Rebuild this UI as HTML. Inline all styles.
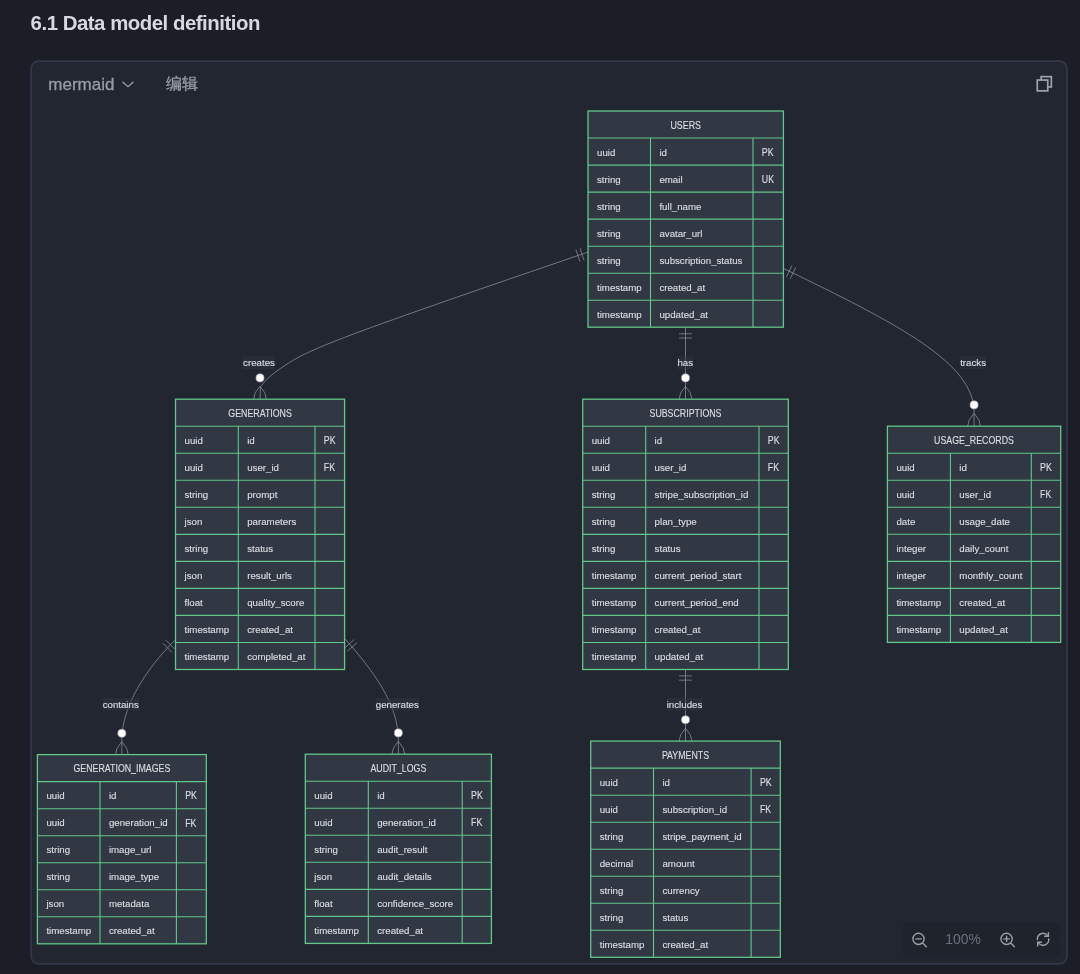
<!DOCTYPE html>
<html><head><meta charset="utf-8"><style>
html,body{margin:0;padding:0;width:1080px;height:974px;overflow:hidden;background:#1b1e26;font-family:"Liberation Sans",sans-serif;}
.title{position:absolute;left:30.6px;top:9.6px;font-size:20.4px;letter-spacing:-0.48px;font-weight:bold;color:#d6d9e0;white-space:nowrap;line-height:26px;}
.box{position:absolute;left:30.7px;top:60.7px;width:1036.6px;height:903.2px;box-sizing:border-box;border:1.4px solid #363a4a;border-radius:8px;background:#22252f;}
.hdr{position:absolute;left:48.3px;top:72.6px;-webkit-text-stroke:0.3px #9a9da7;font-size:17px;color:#9a9da7;white-space:nowrap;line-height:24px;}
.edit{position:absolute;left:165.5px;top:72px;-webkit-text-stroke:0.3px #9a9da7;font-size:16px;color:#9a9da7;white-space:nowrap;line-height:24px;}
svg{position:absolute;left:0;top:0;}
svg text{stroke:#dadce2;stroke-width:0.15px;}
.wrap{position:absolute;left:0;top:0;width:1080px;height:974px;will-change:transform;}
.tb{position:absolute;left:901.5px;top:922.2px;width:158px;height:34.8px;border-radius:7px;background:#1f232c;}
.pct{position:absolute;left:945.3px;top:930.4px;font-size:13.9px;color:#6d707b;line-height:18px;white-space:nowrap;}
</style></head><body><div class="wrap">
<div class="title">6.1 Data model definition</div>
<svg width="1080" height="974" style="position:absolute;left:0;top:0"><rect x="31.1" y="61.1" width="1035.9" height="902.7" rx="7.5" fill="#222630" stroke="#34374a" stroke-width="1.7"/></svg>
<div class="hdr">mermaid</div>
<div class="edit">编辑</div>
<div class="tb"></div>
<div class="pct">100%</div>
<svg width="1080" height="974" viewBox="0 0 1080 974">
<g>
<path d="M122.5,81.7L128,86.7L133.5,81.7" fill="none" stroke="#9a9da7" stroke-width="1.25"/>
<g fill="none" stroke="#9fa2ab" stroke-width="1.7">
<rect x="1041.15" y="76.65" width="10.2" height="10.3"/>
<rect x="1037.25" y="80.05" width="10.5" height="10.8" fill="#222630"/>
</g>
<g fill="none" stroke="#9c9fa8" stroke-width="1.4" stroke-linecap="round">
<circle cx="918.5" cy="938.9" r="5.6"/><path d="M922.6,943L926.3,946.7M915.8,938.9H921.2"/>
<circle cx="1006.6" cy="938.9" r="5.6"/><path d="M1010.7,943L1014.4,946.7M1003.9,938.9H1009.3M1006.6,936.2V941.6"/>
<path d="M1037.4,939.5A5.7,5.7 0 0 1 1047.6,935.6M1048.7,938.9A5.7,5.7 0 0 1 1038.6,943.1"/>
<path d="M1048.4,932.6V936.3H1044.7M1037.7,945.9V942.2H1041.4"/>
</g>
</g>
<g font-family="Liberation Sans, sans-serif" font-size="9.9" fill="#dadce2">
<path d="M588.00,252.10L544.04,267.16C500.09,282.22,412.18,312.35,361.99,330.87C311.80,349.39,299.33,356.30,288.32,363.29C277.30,370.28,267.73,377.36,263.25,383.35C261.5,385.7,260.6,386.6,260.4,387.0L260.00,399.20" fill="none" stroke="#9598a3" stroke-width="0.71"/><path d="M685.5,327.4L685.5,399.2" fill="none" stroke="#9598a3" stroke-width="0.71"/><path d="M783.4,268.4C898.4,324.1,974.05,362.9,974.05,412.0L974.05,426.2" fill="none" stroke="#9598a3" stroke-width="0.71"/><path d="M174.9,640.2C145.1,669.9,121.85,707.1,121.85,740.0L121.85,754.6" fill="none" stroke="#9598a3" stroke-width="0.71"/><path d="M345.1,639.0C373.3,670.9,398.35,703.9,398.35,740.0L398.35,754.2" fill="none" stroke="#9598a3" stroke-width="0.71"/><path d="M685.5,669.5L685.5,741.1" fill="none" stroke="#9598a3" stroke-width="0.71"/><path d="M584.02,260.21L579.89,248.12M579.99,261.59L575.86,249.50M691.89,333.79L679.11,333.79M691.89,338.05L679.11,338.05M791.94,265.43L786.37,276.94M795.77,267.29L790.20,278.79M174.88,649.24L165.86,640.18M171.87,652.24L162.85,643.19M354.12,639.56L344.54,648.02M356.94,642.75L347.37,651.21M691.89,675.89L679.11,675.89M691.89,680.15L679.11,680.15" fill="none" stroke="#9598a3" stroke-width="0.71"/><path d="M260.00,386.42Q247.22,399.20 260.00,411.98Q272.78,399.20 260.00,386.42" fill="none" stroke="#9598a3" stroke-width="0.71"/><circle cx="260.00" cy="377.90" r="4.05" fill="#fff" stroke="#9598a3" stroke-width="0.71"/><path d="M685.50,386.42Q672.72,399.20 685.50,411.98Q698.28,399.20 685.50,386.42" fill="none" stroke="#9598a3" stroke-width="0.71"/><circle cx="685.50" cy="377.90" r="4.05" fill="#fff" stroke="#9598a3" stroke-width="0.71"/><path d="M974.05,413.42Q961.27,426.20 974.05,438.98Q986.83,426.20 974.05,413.42" fill="none" stroke="#9598a3" stroke-width="0.71"/><circle cx="974.05" cy="404.90" r="4.05" fill="#fff" stroke="#9598a3" stroke-width="0.71"/><path d="M121.85,741.82Q109.07,754.60 121.85,767.38Q134.63,754.60 121.85,741.82" fill="none" stroke="#9598a3" stroke-width="0.71"/><circle cx="121.85" cy="733.30" r="4.05" fill="#fff" stroke="#9598a3" stroke-width="0.71"/><path d="M398.35,741.42Q385.57,754.20 398.35,766.98Q411.13,754.20 398.35,741.42" fill="none" stroke="#9598a3" stroke-width="0.71"/><circle cx="398.35" cy="732.90" r="4.05" fill="#fff" stroke="#9598a3" stroke-width="0.71"/><path d="M685.50,728.32Q672.72,741.10 685.50,753.88Q698.28,741.10 685.50,728.32" fill="none" stroke="#9598a3" stroke-width="0.71"/><circle cx="685.50" cy="719.80" r="4.05" fill="#fff" stroke="#9598a3" stroke-width="0.71"/>
<rect x="242.8" y="356.3" width="32.4" height="12.9" fill="#2e3442" opacity="0.5"/><text x="259.0" y="366.0" text-anchor="middle" textLength="31.8" lengthAdjust="spacingAndGlyphs">creates</text><rect x="677.1" y="356.3" width="16.2" height="12.9" fill="#2e3442" opacity="0.5"/><text x="685.2" y="366.0" text-anchor="middle" textLength="15.6" lengthAdjust="spacingAndGlyphs">has</text><rect x="959.9" y="356.3" width="26.5" height="12.9" fill="#2e3442" opacity="0.5"/><text x="973.1" y="366.0" text-anchor="middle" textLength="25.9" lengthAdjust="spacingAndGlyphs">tracks</text><rect x="102.3" y="697.9" width="36.7" height="12.9" fill="#2e3442" opacity="0.5"/><text x="120.7" y="707.6" text-anchor="middle" textLength="36.1" lengthAdjust="spacingAndGlyphs">contains</text><rect x="375.4" y="697.9" width="43.7" height="12.9" fill="#2e3442" opacity="0.5"/><text x="397.3" y="707.6" text-anchor="middle" textLength="43.1" lengthAdjust="spacingAndGlyphs">generates</text><rect x="666.4" y="697.9" width="36.2" height="12.9" fill="#2e3442" opacity="0.5"/><text x="684.5" y="707.6" text-anchor="middle" textLength="35.6" lengthAdjust="spacingAndGlyphs">includes</text>
<rect x="588.0" y="111.0" width="195.4" height="216.2" fill="#313743"/><path d="M588.0,138.0H783.4M588.0,165.1H783.4M588.0,192.1H783.4M588.0,219.1H783.4M588.0,246.2H783.4M588.0,273.2H783.4M588.0,300.2H783.4M650.5,138.0V327.2M753.0,138.0V327.2" stroke="#63c68a" stroke-width="1.1" fill="none"/><rect x="588.0" y="111.0" width="195.4" height="216.2" fill="none" stroke="#63c68a" stroke-width="1.3"/><text x="685.7" y="128.7" text-anchor="middle" textLength="30.4" lengthAdjust="spacingAndGlyphs" font-size="10.1">USERS</text><text x="597.0" y="155.6" text-anchor="start" textLength="18.3" lengthAdjust="spacingAndGlyphs">uuid</text><text x="659.4" y="155.6" text-anchor="start" textLength="7.6" lengthAdjust="spacingAndGlyphs">id</text><text x="761.8" y="155.8" text-anchor="start" textLength="11.8" lengthAdjust="spacingAndGlyphs" font-size="10.3">PK</text><text x="597.0" y="182.7" text-anchor="start" textLength="23.7" lengthAdjust="spacingAndGlyphs">string</text><text x="659.4" y="182.7" text-anchor="start" textLength="23.2" lengthAdjust="spacingAndGlyphs">email</text><text x="761.8" y="182.9" text-anchor="start" textLength="12.2" lengthAdjust="spacingAndGlyphs" font-size="10.3">UK</text><text x="597.0" y="209.7" text-anchor="start" textLength="23.7" lengthAdjust="spacingAndGlyphs">string</text><text x="659.4" y="209.7" text-anchor="start" textLength="42.1" lengthAdjust="spacingAndGlyphs">full_name</text><text x="597.0" y="236.7" text-anchor="start" textLength="23.7" lengthAdjust="spacingAndGlyphs">string</text><text x="659.4" y="236.7" text-anchor="start" textLength="43.1" lengthAdjust="spacingAndGlyphs">avatar_url</text><text x="597.0" y="263.8" text-anchor="start" textLength="23.7" lengthAdjust="spacingAndGlyphs">string</text><text x="659.4" y="263.8" text-anchor="start" textLength="83.0" lengthAdjust="spacingAndGlyphs">subscription_status</text><text x="597.0" y="290.8" text-anchor="start" textLength="44.7" lengthAdjust="spacingAndGlyphs">timestamp</text><text x="659.4" y="290.8" text-anchor="start" textLength="45.8" lengthAdjust="spacingAndGlyphs">created_at</text><text x="597.0" y="317.8" text-anchor="start" textLength="44.7" lengthAdjust="spacingAndGlyphs">timestamp</text><text x="659.4" y="317.8" text-anchor="start" textLength="48.6" lengthAdjust="spacingAndGlyphs">updated_at</text><rect x="175.5" y="399.2" width="169.1" height="270.3" fill="#313743"/><path d="M175.5,426.2H344.6M175.5,453.3H344.6M175.5,480.3H344.6M175.5,507.3H344.6M175.5,534.4H344.6M175.5,561.4H344.6M175.5,588.4H344.6M175.5,615.4H344.6M175.5,642.5H344.6M238.3,426.2V669.5M315.0,426.2V669.5" stroke="#63c68a" stroke-width="1.1" fill="none"/><rect x="175.5" y="399.2" width="169.1" height="270.3" fill="none" stroke="#63c68a" stroke-width="1.3"/><text x="260.1" y="416.9" text-anchor="middle" textLength="63.5" lengthAdjust="spacingAndGlyphs" font-size="10.1">GENERATIONS</text><text x="184.5" y="443.8" text-anchor="start" textLength="18.3" lengthAdjust="spacingAndGlyphs">uuid</text><text x="247.2" y="443.8" text-anchor="start" textLength="7.6" lengthAdjust="spacingAndGlyphs">id</text><text x="323.8" y="444.0" text-anchor="start" textLength="11.8" lengthAdjust="spacingAndGlyphs" font-size="10.3">PK</text><text x="184.5" y="470.9" text-anchor="start" textLength="18.3" lengthAdjust="spacingAndGlyphs">uuid</text><text x="247.2" y="470.9" text-anchor="start" textLength="31.8" lengthAdjust="spacingAndGlyphs">user_id</text><text x="323.8" y="471.1" text-anchor="start" textLength="11.3" lengthAdjust="spacingAndGlyphs" font-size="10.3">FK</text><text x="184.5" y="497.9" text-anchor="start" textLength="23.7" lengthAdjust="spacingAndGlyphs">string</text><text x="247.2" y="497.9" text-anchor="start" textLength="30.2" lengthAdjust="spacingAndGlyphs">prompt</text><text x="184.5" y="524.9" text-anchor="start" textLength="17.8" lengthAdjust="spacingAndGlyphs">json</text><text x="247.2" y="524.9" text-anchor="start" textLength="49.1" lengthAdjust="spacingAndGlyphs">parameters</text><text x="184.5" y="552.0" text-anchor="start" textLength="23.7" lengthAdjust="spacingAndGlyphs">string</text><text x="247.2" y="552.0" text-anchor="start" textLength="25.9" lengthAdjust="spacingAndGlyphs">status</text><text x="184.5" y="579.0" text-anchor="start" textLength="17.8" lengthAdjust="spacingAndGlyphs">json</text><text x="247.2" y="579.0" text-anchor="start" textLength="44.8" lengthAdjust="spacingAndGlyphs">result_urls</text><text x="184.5" y="606.0" text-anchor="start" textLength="18.3" lengthAdjust="spacingAndGlyphs">float</text><text x="247.2" y="606.0" text-anchor="start" textLength="57.2" lengthAdjust="spacingAndGlyphs">quality_score</text><text x="184.5" y="633.1" text-anchor="start" textLength="44.7" lengthAdjust="spacingAndGlyphs">timestamp</text><text x="247.2" y="633.1" text-anchor="start" textLength="45.8" lengthAdjust="spacingAndGlyphs">created_at</text><text x="184.5" y="660.1" text-anchor="start" textLength="44.7" lengthAdjust="spacingAndGlyphs">timestamp</text><text x="247.2" y="660.1" text-anchor="start" textLength="58.2" lengthAdjust="spacingAndGlyphs">completed_at</text><rect x="582.7" y="399.2" width="205.6" height="270.3" fill="#313743"/><path d="M582.7,426.2H788.3M582.7,453.3H788.3M582.7,480.3H788.3M582.7,507.3H788.3M582.7,534.4H788.3M582.7,561.4H788.3M582.7,588.4H788.3M582.7,615.4H788.3M582.7,642.5H788.3M645.7,426.2V669.5M759.0,426.2V669.5" stroke="#63c68a" stroke-width="1.1" fill="none"/><rect x="582.7" y="399.2" width="205.6" height="270.3" fill="none" stroke="#63c68a" stroke-width="1.3"/><text x="685.5" y="416.9" text-anchor="middle" textLength="72.0" lengthAdjust="spacingAndGlyphs" font-size="10.1">SUBSCRIPTIONS</text><text x="591.7" y="443.8" text-anchor="start" textLength="18.3" lengthAdjust="spacingAndGlyphs">uuid</text><text x="654.6" y="443.8" text-anchor="start" textLength="7.6" lengthAdjust="spacingAndGlyphs">id</text><text x="767.8" y="444.0" text-anchor="start" textLength="11.8" lengthAdjust="spacingAndGlyphs" font-size="10.3">PK</text><text x="591.7" y="470.9" text-anchor="start" textLength="18.3" lengthAdjust="spacingAndGlyphs">uuid</text><text x="654.6" y="470.9" text-anchor="start" textLength="31.8" lengthAdjust="spacingAndGlyphs">user_id</text><text x="767.8" y="471.1" text-anchor="start" textLength="11.3" lengthAdjust="spacingAndGlyphs" font-size="10.3">FK</text><text x="591.7" y="497.9" text-anchor="start" textLength="23.7" lengthAdjust="spacingAndGlyphs">string</text><text x="654.6" y="497.9" text-anchor="start" textLength="93.8" lengthAdjust="spacingAndGlyphs">stripe_subscription_id</text><text x="591.7" y="524.9" text-anchor="start" textLength="23.7" lengthAdjust="spacingAndGlyphs">string</text><text x="654.6" y="524.9" text-anchor="start" textLength="42.1" lengthAdjust="spacingAndGlyphs">plan_type</text><text x="591.7" y="552.0" text-anchor="start" textLength="23.7" lengthAdjust="spacingAndGlyphs">string</text><text x="654.6" y="552.0" text-anchor="start" textLength="25.9" lengthAdjust="spacingAndGlyphs">status</text><text x="591.7" y="579.0" text-anchor="start" textLength="44.7" lengthAdjust="spacingAndGlyphs">timestamp</text><text x="654.6" y="579.0" text-anchor="start" textLength="86.8" lengthAdjust="spacingAndGlyphs">current_period_start</text><text x="591.7" y="606.0" text-anchor="start" textLength="44.7" lengthAdjust="spacingAndGlyphs">timestamp</text><text x="654.6" y="606.0" text-anchor="start" textLength="84.1" lengthAdjust="spacingAndGlyphs">current_period_end</text><text x="591.7" y="633.1" text-anchor="start" textLength="44.7" lengthAdjust="spacingAndGlyphs">timestamp</text><text x="654.6" y="633.1" text-anchor="start" textLength="45.8" lengthAdjust="spacingAndGlyphs">created_at</text><text x="591.7" y="660.1" text-anchor="start" textLength="44.7" lengthAdjust="spacingAndGlyphs">timestamp</text><text x="654.6" y="660.1" text-anchor="start" textLength="48.6" lengthAdjust="spacingAndGlyphs">updated_at</text><rect x="887.4" y="426.2" width="173.3" height="216.2" fill="#313743"/><path d="M887.4,453.2H1060.7M887.4,480.3H1060.7M887.4,507.3H1060.7M887.4,534.3H1060.7M887.4,561.4H1060.7M887.4,588.4H1060.7M887.4,615.4H1060.7M950.4,453.2V642.4M1031.3,453.2V642.4" stroke="#63c68a" stroke-width="1.1" fill="none"/><rect x="887.4" y="426.2" width="173.3" height="216.2" fill="none" stroke="#63c68a" stroke-width="1.3"/><text x="974.0" y="443.9" text-anchor="middle" textLength="79.8" lengthAdjust="spacingAndGlyphs" font-size="10.1">USAGE_RECORDS</text><text x="896.4" y="470.8" text-anchor="start" textLength="18.3" lengthAdjust="spacingAndGlyphs">uuid</text><text x="959.3" y="470.8" text-anchor="start" textLength="7.6" lengthAdjust="spacingAndGlyphs">id</text><text x="1040.1" y="471.0" text-anchor="start" textLength="11.8" lengthAdjust="spacingAndGlyphs" font-size="10.3">PK</text><text x="896.4" y="497.9" text-anchor="start" textLength="18.3" lengthAdjust="spacingAndGlyphs">uuid</text><text x="959.3" y="497.9" text-anchor="start" textLength="31.8" lengthAdjust="spacingAndGlyphs">user_id</text><text x="1040.1" y="498.1" text-anchor="start" textLength="11.3" lengthAdjust="spacingAndGlyphs" font-size="10.3">FK</text><text x="896.4" y="524.9" text-anchor="start" textLength="18.9" lengthAdjust="spacingAndGlyphs">date</text><text x="959.3" y="524.9" text-anchor="start" textLength="50.7" lengthAdjust="spacingAndGlyphs">usage_date</text><text x="896.4" y="551.9" text-anchor="start" textLength="29.7" lengthAdjust="spacingAndGlyphs">integer</text><text x="959.3" y="551.9" text-anchor="start" textLength="49.1" lengthAdjust="spacingAndGlyphs">daily_count</text><text x="896.4" y="579.0" text-anchor="start" textLength="29.7" lengthAdjust="spacingAndGlyphs">integer</text><text x="959.3" y="579.0" text-anchor="start" textLength="63.1" lengthAdjust="spacingAndGlyphs">monthly_count</text><text x="896.4" y="606.0" text-anchor="start" textLength="44.7" lengthAdjust="spacingAndGlyphs">timestamp</text><text x="959.3" y="606.0" text-anchor="start" textLength="45.8" lengthAdjust="spacingAndGlyphs">created_at</text><text x="896.4" y="633.0" text-anchor="start" textLength="44.7" lengthAdjust="spacingAndGlyphs">timestamp</text><text x="959.3" y="633.0" text-anchor="start" textLength="48.6" lengthAdjust="spacingAndGlyphs">updated_at</text><rect x="37.4" y="754.6" width="168.9" height="189.2" fill="#313743"/><path d="M37.4,781.6H206.3M37.4,808.7H206.3M37.4,835.7H206.3M37.4,862.7H206.3M37.4,889.8H206.3M37.4,916.8H206.3M100.0,781.6V943.8M176.4,781.6V943.8" stroke="#63c68a" stroke-width="1.1" fill="none"/><rect x="37.4" y="754.6" width="168.9" height="189.2" fill="none" stroke="#63c68a" stroke-width="1.3"/><text x="121.9" y="772.3" text-anchor="middle" textLength="96.8" lengthAdjust="spacingAndGlyphs" font-size="10.1">GENERATION_IMAGES</text><text x="46.4" y="799.2" text-anchor="start" textLength="18.3" lengthAdjust="spacingAndGlyphs">uuid</text><text x="108.9" y="799.2" text-anchor="start" textLength="7.6" lengthAdjust="spacingAndGlyphs">id</text><text x="185.2" y="799.4" text-anchor="start" textLength="11.8" lengthAdjust="spacingAndGlyphs" font-size="10.3">PK</text><text x="46.4" y="826.3" text-anchor="start" textLength="18.3" lengthAdjust="spacingAndGlyphs">uuid</text><text x="108.9" y="826.3" text-anchor="start" textLength="58.8" lengthAdjust="spacingAndGlyphs">generation_id</text><text x="185.2" y="826.5" text-anchor="start" textLength="11.3" lengthAdjust="spacingAndGlyphs" font-size="10.3">FK</text><text x="46.4" y="853.3" text-anchor="start" textLength="23.7" lengthAdjust="spacingAndGlyphs">string</text><text x="108.9" y="853.3" text-anchor="start" textLength="42.6" lengthAdjust="spacingAndGlyphs">image_url</text><text x="46.4" y="880.3" text-anchor="start" textLength="23.7" lengthAdjust="spacingAndGlyphs">string</text><text x="108.9" y="880.3" text-anchor="start" textLength="50.2" lengthAdjust="spacingAndGlyphs">image_type</text><text x="46.4" y="907.4" text-anchor="start" textLength="17.8" lengthAdjust="spacingAndGlyphs">json</text><text x="108.9" y="907.4" text-anchor="start" textLength="40.4" lengthAdjust="spacingAndGlyphs">metadata</text><text x="46.4" y="934.4" text-anchor="start" textLength="44.7" lengthAdjust="spacingAndGlyphs">timestamp</text><text x="108.9" y="934.4" text-anchor="start" textLength="45.8" lengthAdjust="spacingAndGlyphs">created_at</text><rect x="305.3" y="754.2" width="186.1" height="189.2" fill="#313743"/><path d="M305.3,781.2H491.4M305.3,808.3H491.4M305.3,835.3H491.4M305.3,862.3H491.4M305.3,889.4H491.4M305.3,916.4H491.4M368.3,781.2V943.4M462.2,781.2V943.4" stroke="#63c68a" stroke-width="1.1" fill="none"/><rect x="305.3" y="754.2" width="186.1" height="189.2" fill="none" stroke="#63c68a" stroke-width="1.3"/><text x="398.4" y="771.9" text-anchor="middle" textLength="55.8" lengthAdjust="spacingAndGlyphs" font-size="10.1">AUDIT_LOGS</text><text x="314.3" y="798.8" text-anchor="start" textLength="18.3" lengthAdjust="spacingAndGlyphs">uuid</text><text x="377.2" y="798.8" text-anchor="start" textLength="7.6" lengthAdjust="spacingAndGlyphs">id</text><text x="471.0" y="799.0" text-anchor="start" textLength="11.8" lengthAdjust="spacingAndGlyphs" font-size="10.3">PK</text><text x="314.3" y="825.9" text-anchor="start" textLength="18.3" lengthAdjust="spacingAndGlyphs">uuid</text><text x="377.2" y="825.9" text-anchor="start" textLength="58.8" lengthAdjust="spacingAndGlyphs">generation_id</text><text x="471.0" y="826.1" text-anchor="start" textLength="11.3" lengthAdjust="spacingAndGlyphs" font-size="10.3">FK</text><text x="314.3" y="852.9" text-anchor="start" textLength="23.7" lengthAdjust="spacingAndGlyphs">string</text><text x="377.2" y="852.9" text-anchor="start" textLength="50.2" lengthAdjust="spacingAndGlyphs">audit_result</text><text x="314.3" y="879.9" text-anchor="start" textLength="17.8" lengthAdjust="spacingAndGlyphs">json</text><text x="377.2" y="879.9" text-anchor="start" textLength="54.5" lengthAdjust="spacingAndGlyphs">audit_details</text><text x="314.3" y="907.0" text-anchor="start" textLength="18.3" lengthAdjust="spacingAndGlyphs">float</text><text x="377.2" y="907.0" text-anchor="start" textLength="76.0" lengthAdjust="spacingAndGlyphs">confidence_score</text><text x="314.3" y="934.0" text-anchor="start" textLength="44.7" lengthAdjust="spacingAndGlyphs">timestamp</text><text x="377.2" y="934.0" text-anchor="start" textLength="45.8" lengthAdjust="spacingAndGlyphs">created_at</text><rect x="590.7" y="741.1" width="189.6" height="216.2" fill="#313743"/><path d="M590.7,768.1H780.3M590.7,795.2H780.3M590.7,822.2H780.3M590.7,849.2H780.3M590.7,876.2H780.3M590.7,903.3H780.3M590.7,930.3H780.3M653.5,768.1V957.3M751.1,768.1V957.3" stroke="#63c68a" stroke-width="1.1" fill="none"/><rect x="590.7" y="741.1" width="189.6" height="216.2" fill="none" stroke="#63c68a" stroke-width="1.3"/><text x="685.5" y="758.8" text-anchor="middle" textLength="47.2" lengthAdjust="spacingAndGlyphs" font-size="10.1">PAYMENTS</text><text x="599.7" y="785.7" text-anchor="start" textLength="18.3" lengthAdjust="spacingAndGlyphs">uuid</text><text x="662.4" y="785.7" text-anchor="start" textLength="7.6" lengthAdjust="spacingAndGlyphs">id</text><text x="759.9" y="785.9" text-anchor="start" textLength="11.8" lengthAdjust="spacingAndGlyphs" font-size="10.3">PK</text><text x="599.7" y="812.8" text-anchor="start" textLength="18.3" lengthAdjust="spacingAndGlyphs">uuid</text><text x="662.4" y="812.8" text-anchor="start" textLength="64.7" lengthAdjust="spacingAndGlyphs">subscription_id</text><text x="759.9" y="813.0" text-anchor="start" textLength="11.3" lengthAdjust="spacingAndGlyphs" font-size="10.3">FK</text><text x="599.7" y="839.8" text-anchor="start" textLength="23.7" lengthAdjust="spacingAndGlyphs">string</text><text x="662.4" y="839.8" text-anchor="start" textLength="79.3" lengthAdjust="spacingAndGlyphs">stripe_payment_id</text><text x="599.7" y="866.8" text-anchor="start" textLength="33.4" lengthAdjust="spacingAndGlyphs">decimal</text><text x="662.4" y="866.8" text-anchor="start" textLength="32.4" lengthAdjust="spacingAndGlyphs">amount</text><text x="599.7" y="893.9" text-anchor="start" textLength="23.7" lengthAdjust="spacingAndGlyphs">string</text><text x="662.4" y="893.9" text-anchor="start" textLength="37.2" lengthAdjust="spacingAndGlyphs">currency</text><text x="599.7" y="920.9" text-anchor="start" textLength="23.7" lengthAdjust="spacingAndGlyphs">string</text><text x="662.4" y="920.9" text-anchor="start" textLength="25.9" lengthAdjust="spacingAndGlyphs">status</text><text x="599.7" y="947.9" text-anchor="start" textLength="44.7" lengthAdjust="spacingAndGlyphs">timestamp</text><text x="662.4" y="947.9" text-anchor="start" textLength="45.8" lengthAdjust="spacingAndGlyphs">created_at</text>
</g>
</svg>
</div></body></html>
